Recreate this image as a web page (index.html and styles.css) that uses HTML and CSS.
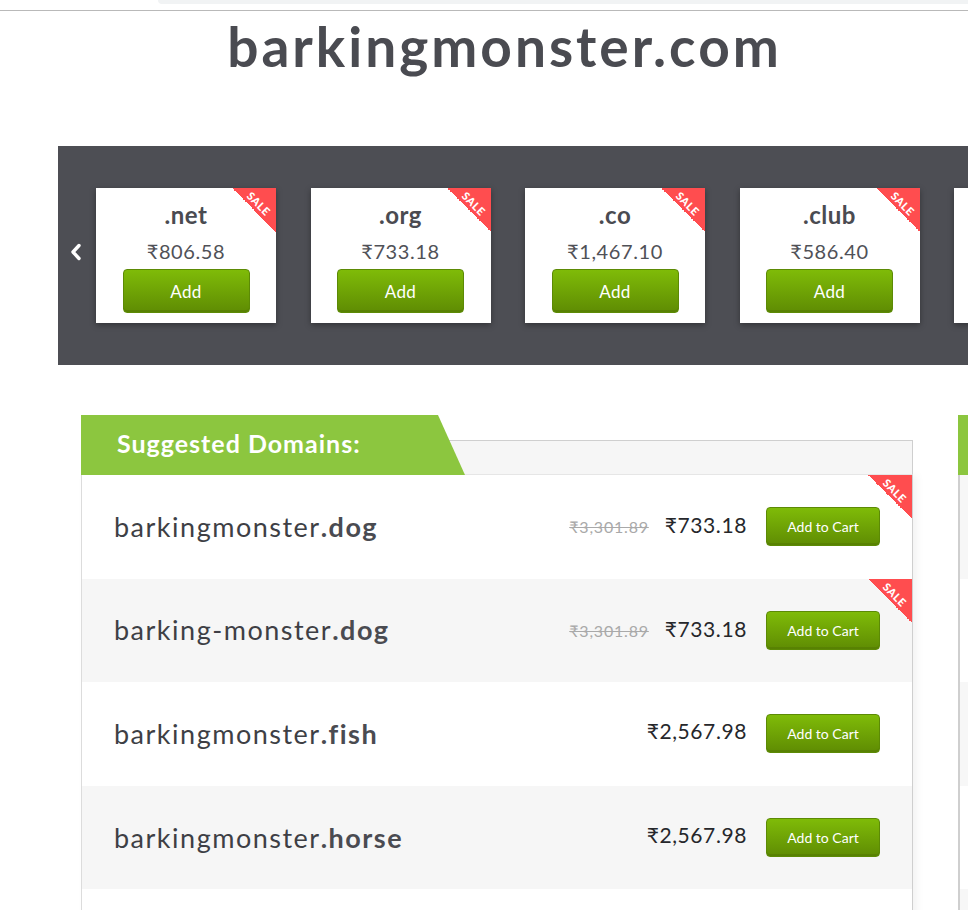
FILE: index.html
```html
<!DOCTYPE html>
<html lang="en">
<head>
  <meta charset="UTF-8">
  <meta name="viewport" content="width=device-width, initial-scale=1.0">
  <title>barkingmonster.com</title>
  <link rel="stylesheet" href="styles.css">
</head>
<body>
  <div class="topbar">
    <div class="topbar-tab"></div>
  </div>

  <h1 class="domain-title">barkingmonster.com</h1>

  <!-- TLD carousel -->
  <div class="tld-strip">
    <button class="tld-prev" aria-label="Previous">
      <svg width="12" height="18" viewBox="0 0 12 18"><path d="M9 2.5 L3 9 L9 15.5" fill="none" stroke="#fff" stroke-width="3.4" stroke-linecap="round" stroke-linejoin="round"/></svg>
    </button>
    <div class="tld-card">
      <span class="sale"><span>SALE</span></span>
      <div class="tld-name">.net</div>
      <div class="tld-price">₹806.58</div>
      <button class="btn btn-add">Add</button>
    </div>
    <div class="tld-card">
      <span class="sale"><span>SALE</span></span>
      <div class="tld-name">.org</div>
      <div class="tld-price">₹733.18</div>
      <button class="btn btn-add">Add</button>
    </div>
    <div class="tld-card">
      <span class="sale"><span>SALE</span></span>
      <div class="tld-name">.co</div>
      <div class="tld-price">₹1,467.10</div>
      <button class="btn btn-add">Add</button>
    </div>
    <div class="tld-card">
      <span class="sale"><span>SALE</span></span>
      <div class="tld-name">.club</div>
      <div class="tld-price">₹586.40</div>
      <button class="btn btn-add">Add</button>
    </div>
    <div class="tld-card"></div>
  </div>

  <div class="results">
    <!-- Suggested domains -->
    <div class="panel">
      <div class="panel-head">
        <div class="panel-tab">Suggested Domains:</div>
        <div class="panel-bar"></div>
      </div>
      <div class="panel-body">
        <div class="domain-row">
          <span class="sale"><span>SALE</span></span>
          <div class="domain-name">barkingmonster<b>.dog</b></div>
          <div class="domain-buy">
            <s class="old-price">₹3,301.89</s>
            <span class="price">₹733.18</span>
            <button class="btn btn-cart">Add to Cart</button>
          </div>
        </div>
        <div class="domain-row">
          <span class="sale"><span>SALE</span></span>
          <div class="domain-name">barking-monster<b>.dog</b></div>
          <div class="domain-buy">
            <s class="old-price">₹3,301.89</s>
            <span class="price">₹733.18</span>
            <button class="btn btn-cart">Add to Cart</button>
          </div>
        </div>
        <div class="domain-row">
          <div class="domain-name">barkingmonster<b>.fish</b></div>
          <div class="domain-buy">
            <span class="price price-up">₹2,567.98</span>
            <button class="btn btn-cart">Add to Cart</button>
          </div>
        </div>
        <div class="domain-row">
          <div class="domain-name">barkingmonster<b>.horse</b></div>
          <div class="domain-buy">
            <span class="price price-up">₹2,567.98</span>
            <button class="btn btn-cart">Add to Cart</button>
          </div>
        </div>
        <div class="domain-row"></div>
      </div>
    </div>

    <!-- second column, cut off at the window edge -->
    <div class="panel panel-side">
      <div class="panel-head">
        <div class="panel-tab"></div>
      </div>
      <div class="panel-body">
        <div class="domain-row"></div>
        <div class="domain-row"></div>
        <div class="domain-row"></div>
        <div class="domain-row"></div>
        <div class="domain-row"></div>
      </div>
    </div>
  </div>
</body>
</html>
```

FILE: styles.css
```css
:root {
  --text-dark: #4a4b51;
  --band-bg: #4d4e54;
  --green: #8cc63f;
  --sale-red: #ff4d4f;
  --row-alt: #f6f6f6;
}

html, body {
  margin: 0;
  padding: 0;
  background: #fff;
  overflow: hidden;
}

body {
  font-family: Lato, "Noto Sans", sans-serif;
  color: var(--text-dark);
  width: 968px;
  height: 910px;
}

.topbar {
  height: 10px;
  border-bottom: 1px solid #b9b9b9;
}

.topbar-tab {
  margin-left: 158px;
  height: 4px;
  background: #f1f3f4;
  border-bottom-left-radius: 6px;
}

.domain-title {
  margin: 0 0 0 58px;
  width: 893px;
  text-align: center;
  font-size: 55px;
  font-weight: 700;
  letter-spacing: 3px;
  line-height: 70px;
  height: 135px;
  color: var(--text-dark);
}

/* carousel band */
.tld-strip {
  margin-left: 58px;
  width: 910px;
  height: 219px;
  box-sizing: border-box;
  padding: 42px 0 42px 12px;
  background: var(--band-bg);
  display: flex;
  align-items: center;
  gap: 34.5px;
  overflow: hidden;
}

.tld-prev {
  flex: none;
  width: 12px;
  height: 18px;
  padding: 0;
  margin: 0 -20.5px 8px 0;
  border: 0;
  background: none;
  display: flex;
}

.tld-card {
  flex: none;
  position: relative;
  width: 180px;
  height: 135px;
  box-sizing: border-box;
  padding: 12px 0 10px;
  background: #fff;
  box-shadow: 0 2px 6px rgba(0, 0, 0, 0.35);
  display: flex;
  flex-direction: column;
  align-items: center;
  overflow: hidden;
}

.tld-name {
  font-size: 24px;
  font-weight: 700;
  letter-spacing: 0.5px;
  line-height: 30px;
}

.tld-price {
  margin-top: 9px;
  font-size: 20px;
  letter-spacing: 0.6px;
  line-height: 24px;
  color: #505157;
}

.btn {
  font-family: inherit;
  color: #fff;
  background: linear-gradient(#7fbb08, #5f8c03);
  border: 1px solid #5c8a05;
  border-radius: 4px;
  box-shadow: inset 0 -2px 0 rgba(0, 0, 0, 0.08);
  cursor: pointer;
  padding: 0;
}

.btn-add {
  margin-top: 6px;
  width: 127px;
  height: 44px;
  font-size: 17px;
  letter-spacing: 0.3px;
}

/* corner ribbon */
.sale {
  position: absolute;
  top: 0;
  right: 0;
  width: 44px;
  height: 44px;
  background: linear-gradient(225deg, var(--sale-red) 50%, transparent 50%);
  overflow: hidden;
}

.sale span {
  position: absolute;
  top: 10px;
  right: -6px;
  width: 46px;
  text-align: center;
  transform: rotate(45deg);
  font-size: 11px;
  font-weight: 900;
  letter-spacing: 0.6px;
  line-height: 11px;
  color: #fff;
}

/* suggestion panels */
.results {
  display: flex;
  gap: 45px;
  margin: 50px 0 0 81px;
}

.panel {
  flex: none;
  width: 832px;
}

.panel-head {
  position: relative;
  height: 60px;
}

.panel-tab {
  position: absolute;
  left: 0;
  top: 0;
  z-index: 1;
  width: 384px;
  height: 60px;
  box-sizing: border-box;
  padding-left: 36px;
  background: var(--green);
  clip-path: polygon(0 0, 357px 0, 384px 100%, 0 100%);
  color: #fff;
  font-size: 25px;
  font-weight: 700;
  letter-spacing: 1px;
  line-height: 56px;
}

.panel-bar {
  position: absolute;
  left: 0;
  right: 0;
  top: 25px;
  bottom: 0;
  background: var(--row-alt);
  border-top: 1px solid #cfcfcf;
  border-right: 1px solid #cfcfcf;
  border-bottom: 1px solid #e6e6e6;
}

.panel-body {
  border-left: 1px solid #dcdcdc;
  border-right: 1px solid #cfcfcf;
  box-shadow: 4px 0 8px rgba(0, 0, 0, 0.05);
}

.domain-row {
  position: relative;
  height: 103.6px;
  box-sizing: border-box;
  padding: 0 32px 0 32px;
  display: flex;
  align-items: center;
  justify-content: space-between;
  overflow: hidden;
}

.domain-row:nth-child(even) {
  background: var(--row-alt);
}

.domain-name {
  font-size: 27px;
  letter-spacing: 1.5px;
  color: #3e3f45;
  margin-bottom: 1px;
}

.domain-name b {
  font-weight: 700;
  color: var(--text-dark);
}

.domain-buy {
  display: flex;
  align-items: center;
}

.old-price {
  font-size: 16px;
  letter-spacing: 0.8px;
  color: #a9a9a9;
  margin-right: 16px;
}

.price {
  font-size: 21px;
  letter-spacing: 0.6px;
  color: #26272b;
  margin-bottom: 4px;
}

.price-up {
  margin-bottom: 6px;
}

.btn-cart {
  margin-left: 19px;
  width: 114px;
  height: 39px;
  font-size: 14px;
}

.panel-side .panel-tab {
  width: 300px;
  clip-path: none;
}

.panel-side .panel-body {
  border-left: 2px solid #cfcfcf;
  border-right: 0;
  box-shadow: none;
}

.panel-side .domain-row:nth-child(odd) {
  background: #f7f7f7;
}

.panel-side .domain-row:nth-child(even) {
  background: #fff;
}
```
